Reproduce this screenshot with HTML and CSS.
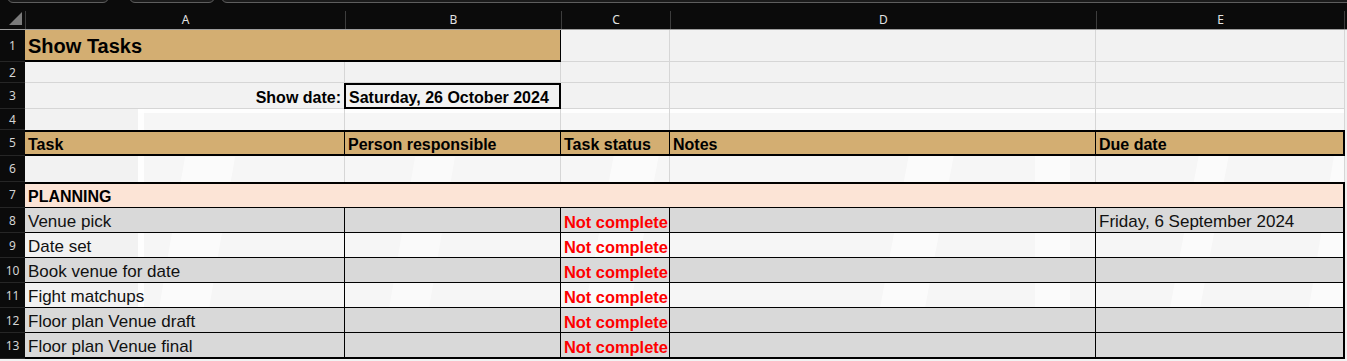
FILE: index.html
```html
<!DOCTYPE html>
<html lang="en">
<head>
    <meta charset="UTF-8">
    <meta name="viewport" content="width=device-width, initial-scale=1.0">
    <title>Show Tasks</title>
    <link rel="stylesheet" href="styles.css">
</head>
<body>
    <div id="tabs">
        <div class="tab tab-one"></div>
        <div class="tab tab-two"></div>
        <div class="tab tab-bar"></div>
    </div>

    <div class="row heads">
        <div class="corner"><span class="select-all"></span></div>
        <div class="letter">A</div>
        <div class="letter">B</div>
        <div class="letter">C</div>
        <div class="letter">D</div>
        <div class="letter">E</div>
    </div>

    <div id="sheet">
        <svg class="watermark" width="1345" height="252" viewBox="0 0 1345 252">
            <rect x="138" y="0" width="1207" height="252" fill="#ffffff" opacity="0.3"/>
            <rect x="138" y="0" width="1207" height="4" fill="#ffffff" opacity="0.9"/>
            <rect x="138" y="0" width="6" height="252" fill="#ffffff" opacity="0.9"/>
            <polygon points="150,252 200,252 235,48 185,48" fill="#ffffff" opacity="0.6"/>
            <polygon points="380,252 420,252 455,48 415,48" fill="#ffffff" opacity="0.45"/>
            <polygon points="575,252 620,252 660,40 615,40" fill="#ffffff" opacity="0.6"/>
            <polygon points="870,252 915,252 955,40 910,40" fill="#ffffff" opacity="0.6"/>
            <polygon points="1035,252 1070,252 1070,40 1035,40" fill="#ffffff" opacity="0.5"/>
            <polygon points="1160,252 1190,252 1230,40 1200,40" fill="#ffffff" opacity="0.6"/>
            <polygon points="1300,252 1330,252 1345,170 1345,40 1335,40" fill="#ffffff" opacity="0.5"/>
        </svg>

        <!-- 1 -->
        <div class="row row-title">
            <div class="num">1</div>
            <div class="cell title">Show Tasks</div>
            <div class="cell"></div>
            <div class="cell"></div>
            <div class="cell"></div>
        </div>

        <!-- 2 -->
        <div class="row row-gap">
            <div class="num">2</div>
            <div class="cell"></div>
            <div class="cell"></div>
            <div class="cell"></div>
            <div class="cell"></div>
            <div class="cell"></div>
        </div>

        <!-- 3 -->
        <div class="row row-date">
            <div class="num">3</div>
            <div class="cell label">Show date:</div>
            <div class="cell date-box">Saturday, 26 October 2024</div>
            <div class="cell"></div>
            <div class="cell"></div>
            <div class="cell"></div>
        </div>

        <!-- 4 -->
        <div class="row row-gap open">
            <div class="num">4</div>
            <div class="cell"></div>
            <div class="cell"></div>
            <div class="cell"></div>
            <div class="cell"></div>
            <div class="cell"></div>
        </div>

        <!-- 5 -->
        <div class="row row-head">
            <div class="num">5</div>
            <div class="cell head">Task</div>
            <div class="cell head">Person responsible</div>
            <div class="cell head">Task status</div>
            <div class="cell head">Notes</div>
            <div class="cell head end">Due date</div>
        </div>

        <!-- 6 -->
        <div class="row row-blank open">
            <div class="num">6</div>
            <div class="cell"></div>
            <div class="cell"></div>
            <div class="cell"></div>
            <div class="cell"></div>
            <div class="cell"></div>
        </div>

        <!-- 7 -->
        <div class="row row-section">
            <div class="num">7</div>
            <div class="cell section">PLANNING</div>
        </div>

        <div class="row task shade">
            <div class="num">8</div>
            <div class="cell">Venue pick</div>
            <div class="cell"></div>
            <div class="cell status">Not complete</div>
            <div class="cell"></div>
            <div class="cell end">Friday, 6 September 2024</div>
        </div>
        <div class="row task">
            <div class="num">9</div>
            <div class="cell">Date set</div>
            <div class="cell"></div>
            <div class="cell status">Not complete</div>
            <div class="cell"></div>
            <div class="cell end"></div>
        </div>
        <div class="row task shade">
            <div class="num">10</div>
            <div class="cell">Book venue for date</div>
            <div class="cell"></div>
            <div class="cell status">Not complete</div>
            <div class="cell"></div>
            <div class="cell end"></div>
        </div>
        <div class="row task">
            <div class="num">11</div>
            <div class="cell">Fight matchups</div>
            <div class="cell"></div>
            <div class="cell status">Not complete</div>
            <div class="cell"></div>
            <div class="cell end"></div>
        </div>
        <div class="row task shade">
            <div class="num">12</div>
            <div class="cell">Floor plan Venue draft</div>
            <div class="cell"></div>
            <div class="cell status">Not complete</div>
            <div class="cell"></div>
            <div class="cell end"></div>
        </div>
        <div class="row task shade last">
            <div class="num">13</div>
            <div class="cell">Floor plan Venue final</div>
            <div class="cell"></div>
            <div class="cell status">Not complete</div>
            <div class="cell"></div>
            <div class="cell end"></div>
        </div>
    </div>
</body>
</html>
```

FILE: styles.css
```css
body {
    margin: 0;
    background-color: #f2f2f2;
    font-family: "Liberation Sans", Arial, sans-serif;
    color: #000;
    overflow: hidden;
}

/* top strip with the ribbon tabs cut off */
#tabs {
    display: flex;
    height: 8px;
    padding-left: 7px;
    background-color: #0b0b0b;
    overflow: hidden;
}
.tab {
    height: 20px;
    margin-top: -17px;
    border: 1px solid #5e5e5e;
    border-radius: 6px;
    background-color: #1b1b1b;
    box-sizing: border-box;
}
.tab-one {
    width: 102px;
    margin-right: 20px;
}
.tab-two {
    width: 86px;
    margin-right: 6px;
}
.tab-bar {
    flex: 1;
    margin-right: -10px;
}

.row {
    display: grid;
    grid-template-columns: 25px 320px 216px 109px 426px 249px;
    position: relative;
    z-index: 1;
}

/* column letters */
.heads {
    height: 22px;
    background-color: #0b0b0b;
    border-bottom: 1px solid #9d9d9d;
    box-sizing: border-box;
}
.corner {
    position: relative;
}
.select-all {
    position: absolute;
    right: 3px;
    bottom: 4px;
    width: 0;
    height: 0;
    border-left: 13px solid transparent;
    border-bottom: 13px solid #7b7b7b;
}
.letter {
    margin-top: 3px;
    border-left: 1px solid #3d3d3d;
    color: #e2e2e2;
    font-family: "Noto Sans", sans-serif;
    font-size: 12px;
    line-height: 18px;
    text-align: center;
}
.letter:last-child {
    border-right: 1px solid #3d3d3d;
}

#sheet {
    position: relative;
}
.watermark {
    position: absolute;
    left: 0;
    top: 79px;
    z-index: 0;
}

.num {
    display: flex;
    align-items: center;
    justify-content: center;
    background-color: #0b0b0b;
    border-bottom: 1px solid #262626;
    box-sizing: border-box;
    color: #d4d4d4;
    font-family: "Noto Sans", sans-serif;
    font-size: 12px;
}

.cell {
    display: flex;
    align-items: flex-end;
    padding: 0 3px;
    border-right: 1px solid #d6d6d6;
    border-bottom: 1px solid #d6d6d6;
    box-sizing: border-box;
    white-space: nowrap;
    overflow: hidden;
}

.row-title { height: 32px; }
.row-gap { height: 21px; }
.row-date { height: 26px; }
.row-head { height: 26px; }
.row-blank { height: 26px; }
.row-section { height: 26px; }
.task { height: 25px; }
.task.last { height: 26px; }

.open .cell {
    border-bottom: none;
}

.title {
    grid-column: span 2;
    padding-bottom: 2px;
    background-color: #d3ae72;
    border-right: 1px solid #000;
    border-bottom: 2px solid #000;
    font-size: 20px;
    font-weight: bold;
}

.label {
    justify-content: flex-end;
    padding-right: 4px;
    padding-bottom: 1px;
    border-right: none;
    font-size: 16px;
    font-weight: bold;
}
.date-box {
    margin-left: -1px;
    border: 2px solid #000;
    font-size: 16px;
    font-weight: bold;
}

.head {
    background-color: #d3ae72;
    border-top: 2px solid #000;
    border-right: 1px solid #000;
    border-bottom: 2px solid #000;
    font-size: 16px;
    font-weight: bold;
}

.section {
    grid-column: span 5;
    padding-bottom: 1px;
    background-color: #fce4d6;
    border-top: 2px solid #000;
    border-right: 2px solid #000;
    border-bottom: 1px solid #000;
    font-size: 16px;
    font-weight: bold;
}

.task .cell {
    border-color: #000;
    font-size: 17px;
    color: #111;
}
.task.shade .cell {
    background-color: #d9d9d9;
}
.task.last .cell {
    border-bottom-width: 2px;
}
.cell.end {
    border-right: 2px solid #000;
}
.task .status {
    color: #f00;
    font-size: 16.4px;
    font-weight: bold;
}
```
